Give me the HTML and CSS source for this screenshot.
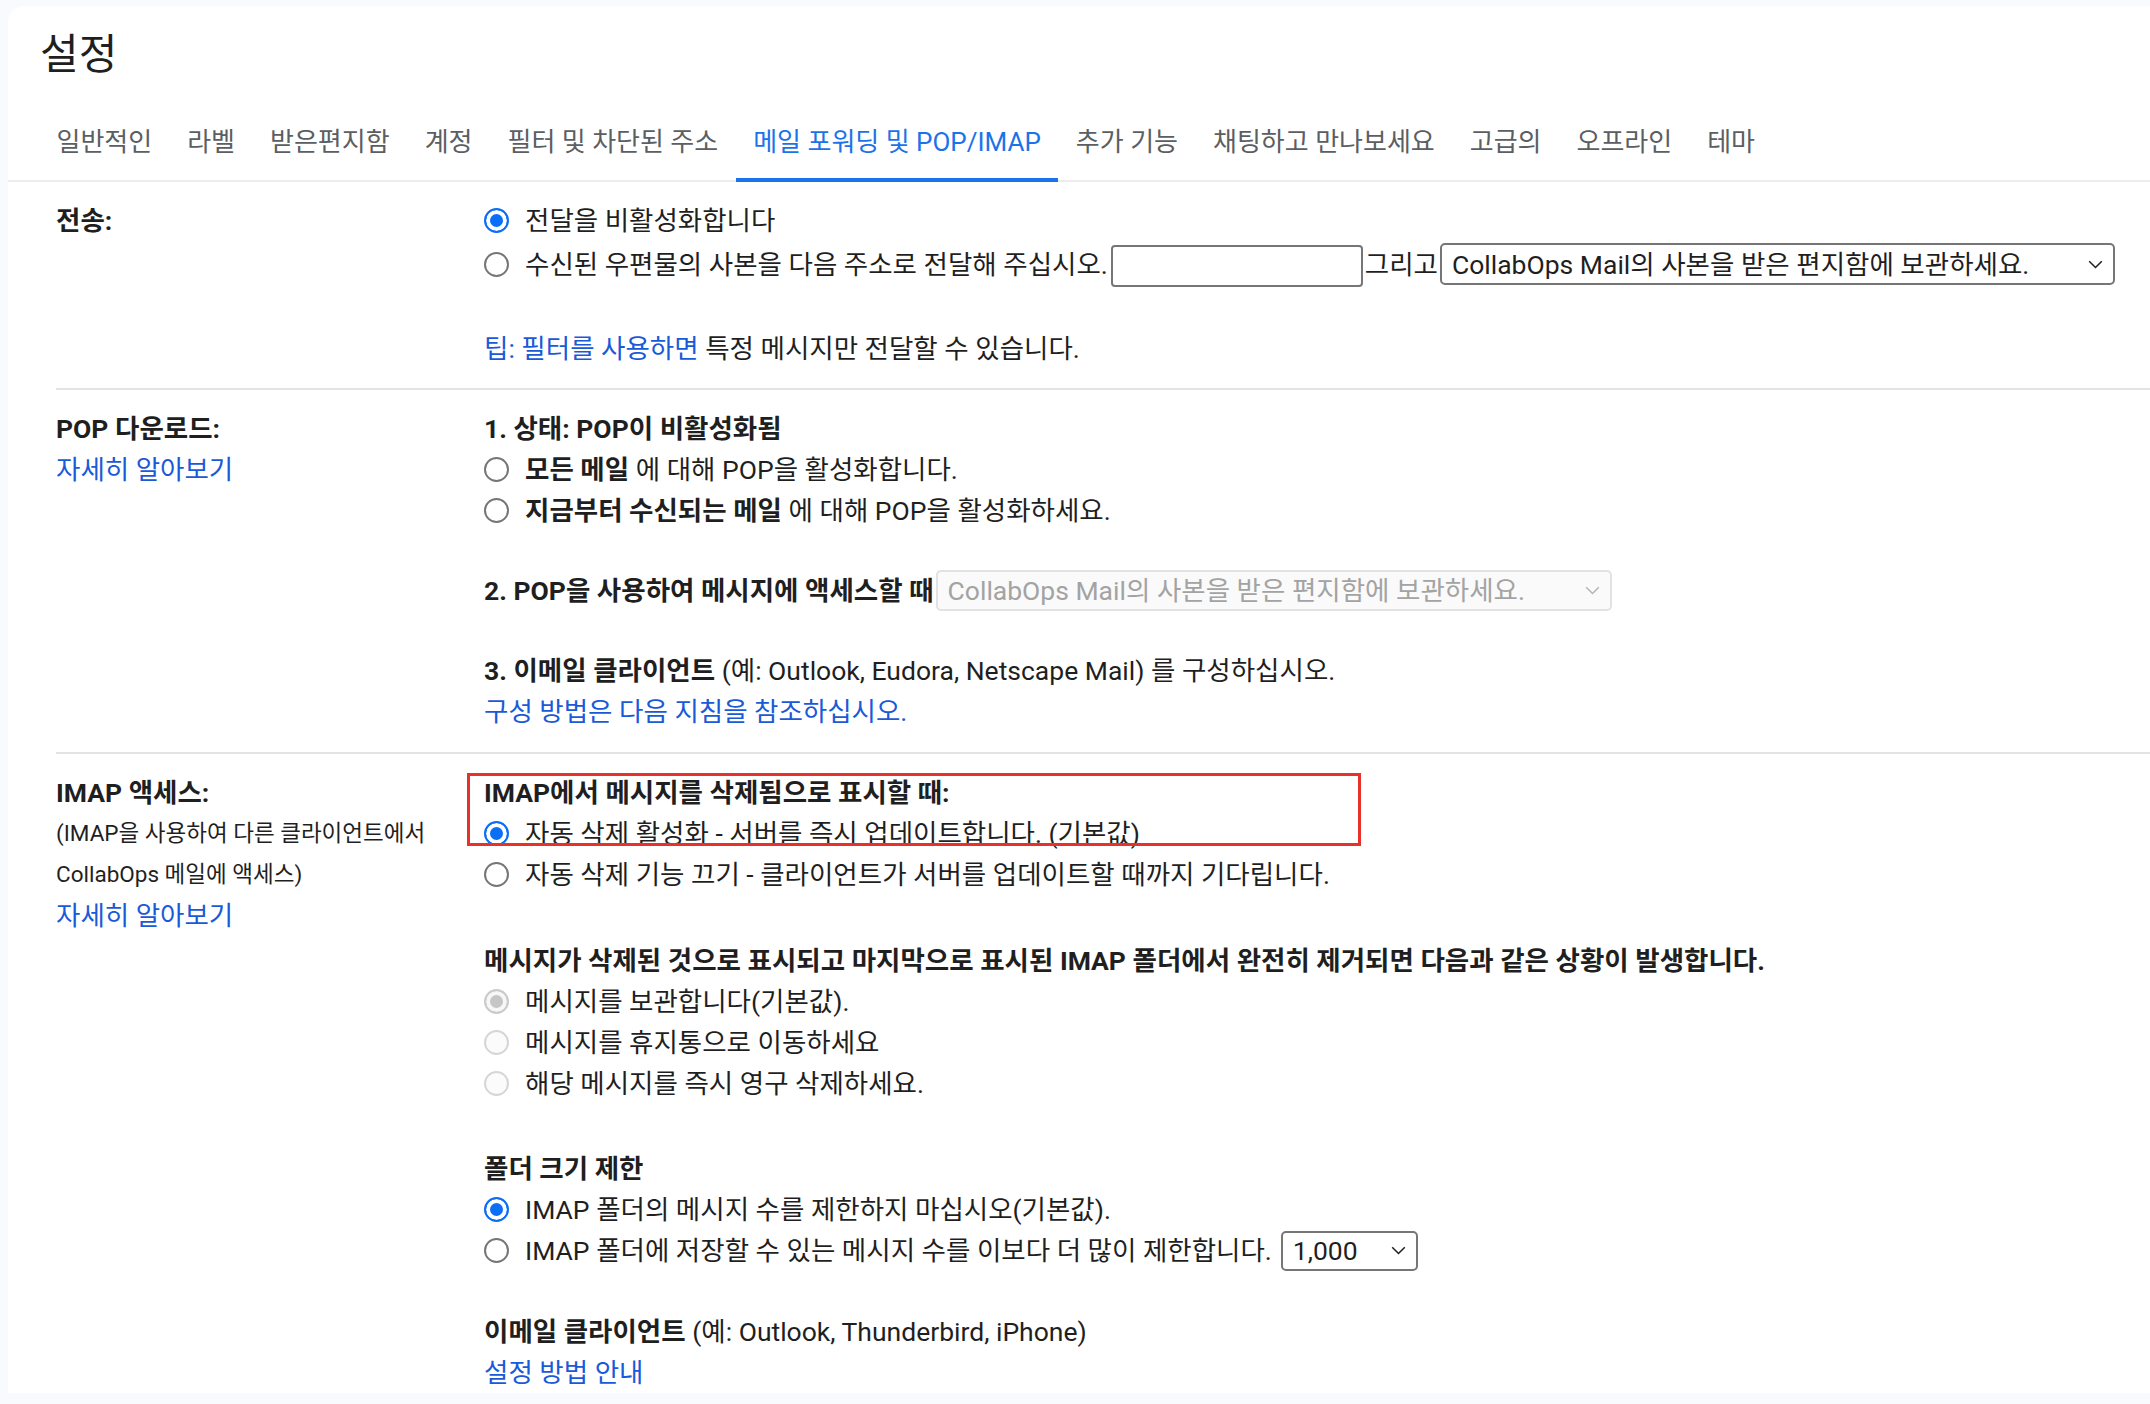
FILE: index.html
```html
<!DOCTYPE html>
<html lang="ko">
<head>
<meta charset="utf-8">
<title>설정</title>
<link rel="stylesheet" href="styles.css">
</head>
<body>
<div class="card">
  <h1 class="title">설정</h1>
  <nav class="tabs">
    <a class="tab">일반적인</a>
    <a class="tab">라벨</a>
    <a class="tab">받은편지함</a>
    <a class="tab">계정</a>
    <a class="tab">필터 및 차단된 주소</a>
    <a class="tab active">메일 포워딩 및 POP/IMAP</a>
    <a class="tab">추가 기능</a>
    <a class="tab">채팅하고 만나보세요</a>
    <a class="tab">고급의</a>
    <a class="tab">오프라인</a>
    <a class="tab">테마</a>
  </nav>

  <section class="sec sec-fwd">
    <div class="label"><div class="bold">전송:</div></div>
    <div class="content">
      <div class="group">
        <label class="opt"><input type="radio" class="radio" name="fwd" checked><span>전달을 비활성화합니다</span></label>
        <label class="opt"><input type="radio" class="radio" name="fwd"><span>수신된 우편물의 사본을 다음 주소로 전달해 주십시오.</span><span class="textbox"></span><span class="and">그리고</span><span class="select sel-main"><span>CollabOps Mail의 사본을 받은 편지함에 보관하세요.</span><svg class="chev" width="15" height="9" viewBox="0 0 15 9"><path d="M1.2 1.2 L7.5 7.5 L13.8 1.2" fill="none" stroke="#1f1f1f" stroke-width="1.5"/></svg></span></label>
      </div>
      <div class="group g-tip"><a class="link">팁: 필터를 사용하면</a> 특정 메시지만 전달할 수 있습니다.</div>
    </div>
  </section>

  <section class="sec sec-pop">
    <div class="label">
      <div class="bold">POP 다운로드:</div>
      <a class="link">자세히 알아보기</a>
    </div>
    <div class="content">
      <div class="group">
        <div class="bold">1. 상태: POP이 비활성화됨</div>
        <label class="opt"><input type="radio" class="radio" name="pop"><span><b>모든 메일</b> 에 대해 POP을 활성화합니다.</span></label>
        <label class="opt"><input type="radio" class="radio" name="pop"><span><b>지금부터 수신되는 메일</b> 에 대해 POP을 활성화하세요.</span></label>
      </div>
      <div class="group g-39">
        <div class="opt"><span class="bold">2. POP을 사용하여 메시지에 액세스할 때</span><span class="select sel-pop disabled"><span>CollabOps Mail의 사본을 받은 편지함에 보관하세요.</span><svg class="chev" width="15" height="9" viewBox="0 0 15 9"><path d="M1.2 1.2 L7.5 7.5 L13.8 1.2" fill="none" stroke="#b5b5b5" stroke-width="1.5"/></svg></span></div>
      </div>
      <div class="group g-39">
        <div><b>3. 이메일 클라이언트</b> (예: Outlook, Eudora, Netscape Mail) 를 구성하십시오.</div>
        <a class="link">구성 방법은 다음 지침을 참조하십시오.</a>
      </div>
    </div>
  </section>

  <section class="sec sec-imap">
    <div class="label">
      <div class="bold">IMAP 액세스:</div>
      <div class="small">(IMAP을 사용하여 다른 클라이언트에서</div>
      <div class="small">CollabOps 메일에 액세스)</div>
      <a class="link">자세히 알아보기</a>
    </div>
    <div class="content">
      <div class="group marked">
        <div class="bold">IMAP에서 메시지를 삭제됨으로 표시할 때:</div>
        <label class="opt"><input type="radio" class="radio" name="exp" checked><span>자동 삭제 활성화 - 서버를 즉시 업데이트합니다. (기본값)</span></label>
        <label class="opt"><input type="radio" class="radio" name="exp"><span>자동 삭제 기능 끄기 - 클라이언트가 서버를 업데이트할 때까지 기다립니다.</span></label>
        <div class="mark"></div>
      </div>
      <div class="group g-45">
        <div class="bold">메시지가 삭제된 것으로 표시되고 마지막으로 표시된 IMAP 폴더에서 완전히 제거되면 다음과 같은 상황이 발생합니다.</div>
        <label class="opt"><input type="radio" class="radio" name="del" checked disabled><span>메시지를 보관합니다(기본값).</span></label>
        <label class="opt"><input type="radio" class="radio" name="del" disabled><span>메시지를 휴지통으로 이동하세요</span></label>
        <label class="opt"><input type="radio" class="radio" name="del" disabled><span>해당 메시지를 즉시 영구 삭제하세요.</span></label>
      </div>
      <div class="group g-44">
        <div class="bold">폴더 크기 제한</div>
        <label class="opt"><input type="radio" class="radio" name="lim" checked><span>IMAP 폴더의 메시지 수를 제한하지 마십시오(기본값).</span></label>
        <label class="opt"><input type="radio" class="radio" name="lim"><span>IMAP 폴더에 저장할 수 있는 메시지 수를 이보다 더 많이 제한합니다.</span><span class="select sel-num"><span>1,000</span><svg class="chev" width="15" height="9" viewBox="0 0 15 9"><path d="M1.2 1.2 L7.5 7.5 L13.8 1.2" fill="none" stroke="#1f1f1f" stroke-width="1.5"/></svg></span></label>
      </div>
      <div class="group g-40">
        <div><b>이메일 클라이언트</b> (예: Outlook, Thunderbird, iPhone)</div>
        <a class="link">설정 방법 안내</a>
      </div>
    </div>
  </section>
</div>
</body>
</html>
```

FILE: styles.css
```css
* { box-sizing: border-box; }

html, body {
  margin: 0;
  height: 100%;
}

body {
  background: #f8fafd;
  font-family: Roboto, "Noto Sans CJK KR", sans-serif;
  font-size: 26.5px;
  color: #1f1f1f;
  overflow: hidden;
}

.card {
  margin: 6px 0 0 8px;
  background: #ffffff;
  border-top-left-radius: 16px;
}

.title {
  margin: 0;
  padding: 21px 0 0 32px;
  font-size: 42px;
  font-weight: 400;
  line-height: 56px;
  color: #1f1f1f;
}

.tabs {
  display: flex;
  align-items: flex-start;
  margin-top: 17px;
  padding-left: 31px;
  height: 82px;
  border-bottom: 2px solid #ececec;
}

.tab {
  display: flex;
  align-items: center;
  height: 82px;
  padding: 0 17.5px 4px;
  font-size: 26px;
  color: #5b5e62;
  white-space: nowrap;
}

.tab.active {
  color: #1a73e8;
  box-shadow: inset 0 -4px 0 #1a73e8;
}

.sec {
  display: grid;
  grid-template-columns: 428px 1fr;
  margin-left: 48px;
  padding: 18px 0 20px;
  border-bottom: 2px solid #e3e3e3;
  line-height: 41px;
}

.sec-fwd { padding-bottom: 19px; }
.sec-pop { padding-bottom: 20px; }
.sec-imap { border-bottom: none; padding-bottom: 0; }

.label {
  display: flex;
  flex-direction: column;
  align-items: flex-start;
}

.bold, b { font-weight: 700; }

.small { font-size: 22.5px; }

.link {
  color: #1a5ad8;
  text-decoration: none;
}

.content {
  display: flex;
  flex-direction: column;
  align-items: flex-start;
}

.group {
  display: flex;
  flex-direction: column;
  align-items: flex-start;
}

.g-tip { display: block; margin-top: 41px; }
.g-39 { margin-top: 39px; }
.g-40 { margin-top: 40px; }
.g-44 { margin-top: 44px; }
.g-45 { margin-top: 45px; }

.opt {
  display: flex;
  align-items: center;
  min-height: 41px;
  white-space: nowrap;
}

.radio {
  appearance: none;
  -webkit-appearance: none;
  flex-shrink: 0;
  width: 25px;
  height: 25px;
  margin: 0 16px 0 0;
  border: 2px solid #767676;
  border-radius: 50%;
  background: #ffffff;
}

.radio:checked {
  border-color: #0b6ef6;
  background: #0b6ef6;
  box-shadow: inset 0 0 0 4px #ffffff;
}

.radio:disabled {
  border-color: #d6d6d6;
  background: #fbfbfb;
}

.radio:disabled:checked {
  border-color: #cbcbcb;
  background: #c6c6c6;
  box-shadow: inset 0 0 0 4px #f7f7f7;
}

.textbox {
  display: inline-block;
  width: 252px;
  height: 42px;
  margin: 4px 2px 0 3px;
  border: 2px solid #767676;
  border-radius: 4px;
  background: #ffffff;
}

.and { margin-right: 2px; }

.select {
  display: flex;
  align-items: center;
  justify-content: space-between;
  height: 42px;
  padding: 0 10px;
  border: 2px solid #767676;
  border-radius: 5px;
  background: #ffffff;
  color: #1f1f1f;
}

.sel-main { width: 675px; }

.sel-pop {
  width: 676px;
  height: 41px;
  margin-left: 2px;
}

.select.disabled {
  border-color: #e2e2e2;
  background: #fafafa;
  color: #a3a3a3;
}

.sel-num {
  width: 137px;
  height: 40px;
  margin-left: 9px;
}

.chev { flex-shrink: 0; }

.marked { position: relative; }

.mark {
  position: absolute;
  left: -17px;
  top: 1px;
  width: 894px;
  height: 73px;
  border: 3px solid #e8312a;
  pointer-events: none;
}
```
